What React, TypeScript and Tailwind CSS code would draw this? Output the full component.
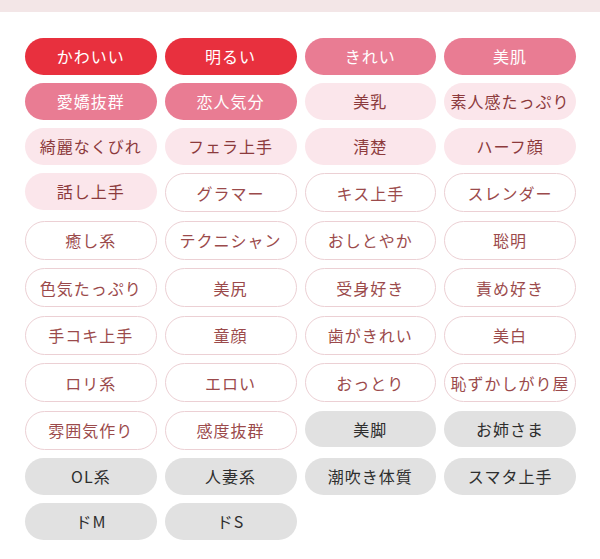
import React from 'react';

type Variant = 'red' | 'pink' | 'light' | 'outline' | 'gray';

interface Tag {
  label: string;
  variant: Variant;
}

const tags: Tag[] = [
  { label: 'かわいい', variant: 'red' },
  { label: '明るい', variant: 'red' },
  { label: 'きれい', variant: 'pink' },
  { label: '美肌', variant: 'pink' },
  { label: '愛嬌抜群', variant: 'pink' },
  { label: '恋人気分', variant: 'pink' },
  { label: '美乳', variant: 'light' },
  { label: '素人感たっぷり', variant: 'light' },
  { label: '綺麗なくびれ', variant: 'light' },
  { label: 'フェラ上手', variant: 'light' },
  { label: '清楚', variant: 'light' },
  { label: 'ハーフ顔', variant: 'light' },
  { label: '話し上手', variant: 'light' },
  { label: 'グラマー', variant: 'outline' },
  { label: 'キス上手', variant: 'outline' },
  { label: 'スレンダー', variant: 'outline' },
  { label: '癒し系', variant: 'outline' },
  { label: 'テクニシャン', variant: 'outline' },
  { label: 'おしとやか', variant: 'outline' },
  { label: '聡明', variant: 'outline' },
  { label: '色気たっぷり', variant: 'outline' },
  { label: '美尻', variant: 'outline' },
  { label: '受身好き', variant: 'outline' },
  { label: '責め好き', variant: 'outline' },
  { label: '手コキ上手', variant: 'outline' },
  { label: '童顔', variant: 'outline' },
  { label: '歯がきれい', variant: 'outline' },
  { label: '美白', variant: 'outline' },
  { label: 'ロリ系', variant: 'outline' },
  { label: 'エロい', variant: 'outline' },
  { label: 'おっとり', variant: 'outline' },
  { label: '恥ずかしがり屋', variant: 'outline' },
  { label: '雰囲気作り', variant: 'outline' },
  { label: '感度抜群', variant: 'outline' },
  { label: '美脚', variant: 'gray' },
  { label: 'お姉さま', variant: 'gray' },
  { label: 'OL系', variant: 'gray' },
  { label: '人妻系', variant: 'gray' },
  { label: '潮吹き体質', variant: 'gray' },
  { label: 'スマタ上手', variant: 'gray' },
  { label: 'ドM', variant: 'gray' },
  { label: 'ドS', variant: 'gray' },
];

const variantClass: Record<Variant, string> = {
  red: 'h-[36.5px] bg-[#e8303e] text-white',
  pink: 'h-[36.5px] bg-[#e97c93] text-white',
  light: 'h-[36.5px] bg-[#fbe6eb] text-[#8c3a3c]',
  outline: 'h-[39px] border-[1.5px] border-[#ecd0d4] bg-white text-[#9b4a4b]',
  gray: 'h-[36.5px] bg-[#e1e1e1] text-[#2e2e2e]',
};

export default function App() {
  return (
    <div className="min-h-[559px] w-[600px] bg-white font-['Noto_Sans_CJK_JP','Noto_Sans',sans-serif]">
      <div className="h-[12px] bg-[#f3e6e7]" />
      <div className="grid grid-cols-4 items-start gap-x-[8px] gap-y-[8.5px] pl-[25px] pr-[24px] pt-[26px]">
        {tags.map((tag) => (
          <div
            key={tag.label}
            className={`flex items-center justify-center whitespace-nowrap rounded-full text-[16px] leading-none tracking-[1px] ${variantClass[tag.variant]}`}
          >
            {tag.label}
          </div>
        ))}
      </div>
    </div>
  );
}
